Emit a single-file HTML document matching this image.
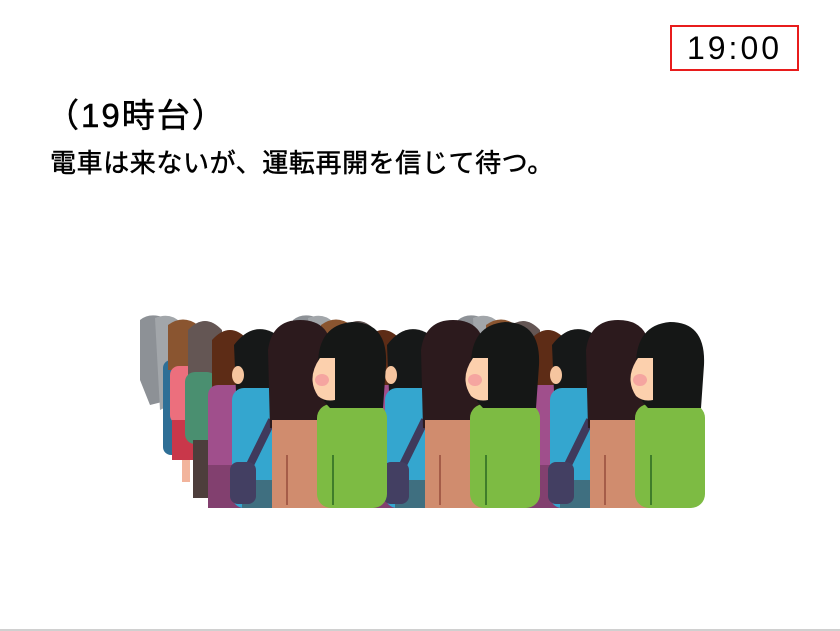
<!DOCTYPE html>
<html><head><meta charset="utf-8"><style>
html,body{margin:0;padding:0;background:#fff;}
body{width:840px;height:631px;position:relative;overflow:hidden;font-family:"Liberation Sans","Noto Sans CJK JP",sans-serif;}
.clock{position:absolute;left:670px;top:25px;width:129px;height:46px;border:2px solid #e81c1c;box-sizing:border-box;font-size:32px;line-height:42px;text-align:center;letter-spacing:3px;color:#000;}
.t1{position:absolute;left:46px;top:96px;font-size:33px;line-height:40px;color:#000;-webkit-text-stroke:0.5px #000;white-space:nowrap;letter-spacing:2px;}
.t2{position:absolute;left:50px;top:146px;font-size:26px;line-height:34px;color:#000;-webkit-text-stroke:0.5px #000;white-space:nowrap;letter-spacing:0.6px;}
.line{position:absolute;left:0;top:629px;width:840px;height:2px;background:#d0d0d0;}
svg{position:absolute;left:0;top:0;}
</style></head><body>
<div class="clock">19:00</div>
<div class="t1">（19時台）</div>
<div class="t2">電車は来ないが、運転再開を信じて待つ。</div>
<svg width="840" height="631" viewBox="0 0 840 631">
<defs>
<g id="grp">
 <path d="M140 320 Q150 312 165 318 L172 330 L170 400 L150 405 L140 380 Z" fill="#8d9196"/>
 <path d="M155 318 Q170 312 180 322 L180 400 L160 410 Z" fill="#a2a6aa"/>
 <rect x="163" y="360" width="20" height="95" rx="8" fill="#2f6f96"/>
 <path d="M168 325 Q183 314 198 325 L198 370 L168 370 Z" fill="#8a5530"/>
 <rect x="170" y="366" width="26" height="58" rx="9" fill="#ec6f7d"/>
 <rect x="172" y="420" width="22" height="40" fill="#c9374a"/>
 <rect x="182" y="460" width="8" height="22" fill="#f2b49c"/>
 <path d="M188 330 Q205 312 222 330 L222 380 L188 380 Z" fill="#645654"/>
 <rect x="185" y="372" width="32" height="72" rx="10" fill="#4a8f70"/>
 <rect x="193" y="440" width="20" height="58" fill="#4d3e3c"/>
 <path d="M212 340 Q230 320 248 340 L248 395 L212 395 Z" fill="#5d2c16"/>
 <rect x="208" y="385" width="40" height="123" rx="10" fill="#a04f8c"/>
 <rect x="208" y="465" width="40" height="43" fill="#82406f"/>
 <path d="M234 345 Q256 316 284 340 L284 392 L236 392 Z" fill="#161818"/>
 <ellipse cx="238" cy="375" rx="6" ry="9" fill="#f6c59f"/>
 <rect x="232" y="388" width="52" height="120" rx="12" fill="#34a6cf"/>
 <rect x="242" y="480" width="42" height="28" fill="#3f6f80"/>
 <path d="M272 420 L245 475" stroke="#3f3a5c" stroke-width="8"/>
 <rect x="230" y="462" width="26" height="42" rx="8" fill="#433f62"/>
 <path d="M268 350 Q272 320 300 320 Q332 320 332 355 L332 425 L270 428 Z" fill="#2c1a1d"/>
 <rect x="272" y="420" width="60" height="88" fill="#d08c6e"/>
 <line x1="287" y1="455" x2="287" y2="505" stroke="#a55c48" stroke-width="2"/>
 <rect x="317" y="404" width="70" height="104" rx="14" fill="#7dbb43"/>
 <line x1="333" y1="455" x2="333" y2="505" stroke="#3f7d2a" stroke-width="2"/>
 <path d="M318 365 Q318 325 352 322 Q388 322 386 365 L383 408 L330 408 Q312 390 318 365 Z" fill="#151716"/>
 <path d="M320 358 Q306 378 318 396 Q325 402 335 400 L335 358 Z" fill="#fcd0ad"/>
 <ellipse cx="322" cy="380" rx="7" ry="6" fill="#f5a5a0"/>
</g>
</defs>
<use href="#grp" transform="translate(318,0)"/>
<use href="#grp" transform="translate(153,0)"/>
<use href="#grp"/>
</svg>
<div class="line"></div>
</body></html>
